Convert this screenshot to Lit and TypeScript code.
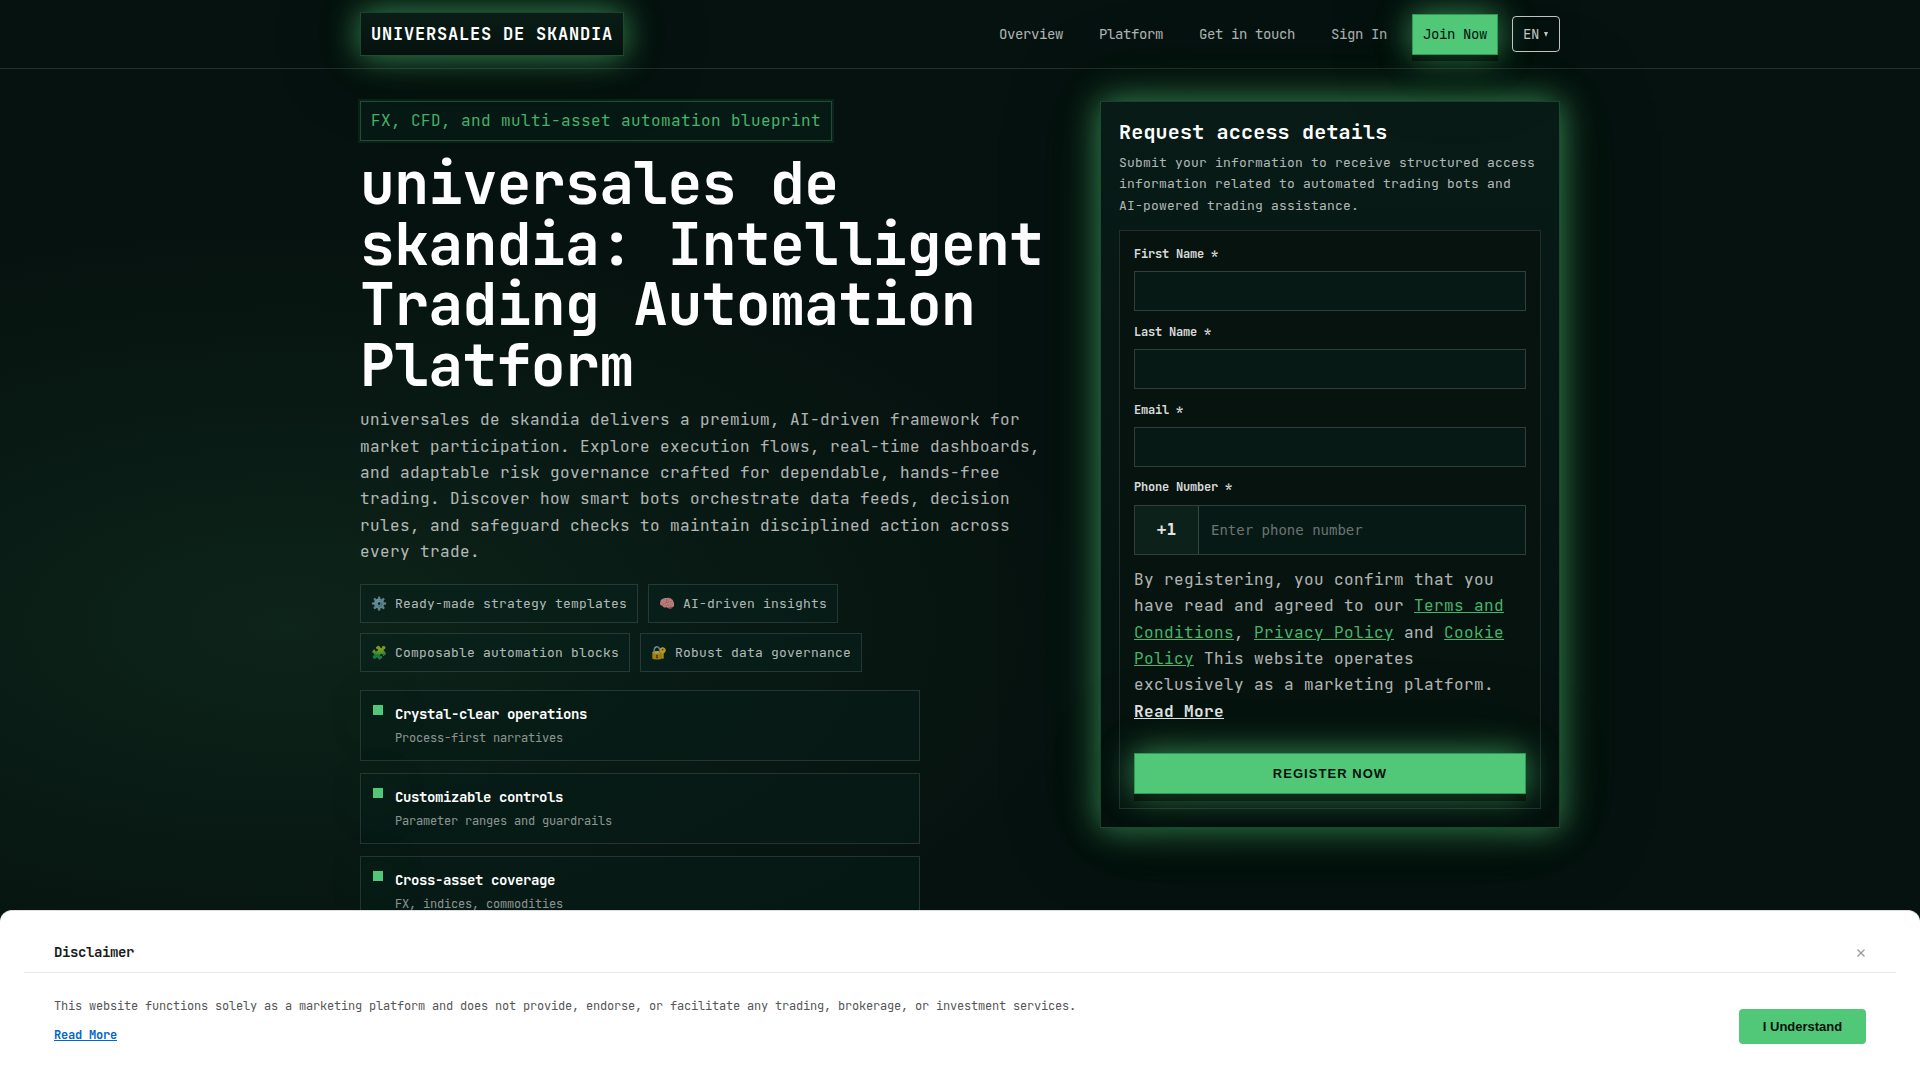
import { LitElement, html, css } from "lit";
import { customElement } from "lit/decorators.js";

@customElement("app-root")
export class AppRoot extends LitElement {
  static styles = css`
    :host {
      --accent: #50c878;
      --line: rgba(255, 255, 255, 0.12);
      --muted: rgba(255, 255, 255, 0.7);
      --glow: 0 0 32px rgba(80, 200, 120, 0.66), 0 0 64px rgba(80, 200, 120, 0.08), 0 0 84px rgba(0, 18, 10, 0.4);
      display: block;
      position: relative;
      width: 100%;
      height: 1080px;
      overflow: hidden;
      color: var(--muted);
      font-family: "JetBrains Mono", "DejaVu Sans Mono", "Liberation Mono", monospace;
      font-size: 16px;
      letter-spacing: 0.4px;
      line-height: 1.65;
      background:
        radial-gradient(820px 400px at 285px 625px, rgba(80, 200, 120, 0.1), rgba(60, 180, 120, 0.05) 50%, transparent 100%),
        #06120f;
    }
    * {
      box-sizing: border-box;
    }
    h1, h2, p, ul {
      margin: 0;
      padding: 0;
    }
    .header {
      border-bottom: 1px solid var(--line);
      padding: 12px 0 12.4px;
    }
    .wrap {
      width: 1200px;
      margin: 0 auto;
    }
    .bar {
      display: flex;
      align-items: center;
      justify-content: space-between;
    }
    .brand {
      position: relative;
      padding: 7px 10px;
      border: 1px solid rgba(80, 200, 120, 0.28);
      background: linear-gradient(#0a1d16, #05110e);
      box-shadow: var(--glow);
      color: #fff;
      font-size: 17px;
      font-weight: 700;
      letter-spacing: 0.8px;
      line-height: 28px;
    }
    .nav {
      display: flex;
      align-items: center;
      font-size: 14px;
      letter-spacing: -0.4px;
      line-height: 23px;
    }
    .link {
      margin-right: 36px;
    }
    .link.last {
      margin-right: 25px;
    }
    .join {
      position: relative;
      padding: 8px 10px;
      border: 1px solid rgba(10, 90, 50, 0.45);
      background: var(--accent);
      color: #05110f;
      box-shadow: 0 6px 0 rgba(0, 0, 0, 0.45), var(--glow);
    }
    .lang {
      display: flex;
      align-items: center;
      gap: 4px;
      position: relative;
      width: 48px;
      height: 36px;
      margin-left: 14px;
      padding-left: 10px;
      border: 1px solid rgba(255, 255, 255, 0.75);
      border-radius: 4px;
      color: rgba(255, 255, 255, 0.75);
    }
    .caret {
      width: 0;
      height: 0;
      margin-left: 1px;
      border: 2.5px solid transparent;
      border-top: 5px solid rgba(255, 255, 255, 0.75);
      border-bottom: 0;
    }
    .hero {
      display: grid;
      grid-template-columns: 1fr 460px;
      gap: 40px;
      align-items: start;
      padding-top: 32px;
    }
    .intro {
      display: flex;
      flex-direction: column;
      align-items: flex-start;
    }
    .eyebrow {
      padding: 6px 10px;
      border: 1px solid rgba(80, 200, 120, 0.32);
      box-shadow: 0 0 0 2px rgba(80, 200, 120, 0.09);
      background: #071914;
      color: #46b56c;
      line-height: 26px;
    }
    h1 {
      margin-top: 11.6px;
      color: #fff;
      font-size: 58px;
      font-weight: 700;
      letter-spacing: -0.63px;
      line-height: 60.6px;
    }
    .about {
      margin-top: 11.8px;
    }
    .chips {
      display: flex;
      flex-wrap: wrap;
      gap: 10px;
      width: 560px;
      margin-top: 18.6px;
      font-size: 13px;
      letter-spacing: 0.2px;
      line-height: 21px;
    }
    .chip {
      display: flex;
      padding: 8px 10px;
      border: 1px solid var(--line);
      background: rgba(8, 32, 27, 0.55);
    }
    .emoji {
      width: 24px;
      letter-spacing: 0;
    }
    .points {
      display: flex;
      flex-direction: column;
      gap: 12px;
      width: 560px;
      margin-top: 18px;
      list-style: none;
    }
    .point {
      display: flex;
      gap: 12px;
      height: 71px;
      padding: 12px;
      border: 1px solid var(--line);
      background: rgba(6, 28, 24, 0.6);
    }
    .mark {
      width: 10px;
      height: 10px;
      margin-top: 2px;
      background: var(--accent);
      box-shadow: 0 4px 40px rgba(30, 130, 60, 0.5);
    }
    .name {
      color: #fff;
      font-size: 14px;
      font-weight: 700;
      letter-spacing: -0.4px;
      line-height: 23.1px;
    }
    .note {
      margin-top: 2.4px;
      color: rgba(255, 255, 255, 0.55);
      font-size: 12px;
      letter-spacing: -0.2px;
      line-height: 19.8px;
    }
    .card {
      padding: 18px;
      border: 1px solid rgba(80, 200, 120, 0.28);
      background: linear-gradient(#081b17, #05110e);
      box-shadow: var(--glow);
    }
    h2 {
      color: #fff;
      font-size: 20px;
      font-weight: 700;
      letter-spacing: 0.2px;
      line-height: 24px;
    }
    .lead {
      margin-top: 7.6px;
      font-size: 13px;
      letter-spacing: 0.2px;
      line-height: 21.45px;
    }
    .form {
      display: flex;
      flex-direction: column;
      height: 578.6px;
      margin-top: 13.8px;
      padding: 12.4px 14px 14px;
      border: 1px solid var(--line);
      background: #06130f;
    }
    .label {
      color: rgba(255, 255, 255, 0.86);
      font-size: 12px;
      font-weight: 700;
      letter-spacing: -0.2px;
      line-height: 20px;
      margin-bottom: 7.7px;
    }
    .input {
      height: 40px;
      margin-bottom: 10.3px;
      border: 1px solid rgba(255, 255, 255, 0.17);
      background: #071915;
    }
    .phone {
      display: flex;
      height: 50px;
      border: 1px solid rgba(255, 255, 255, 0.17);
      background: #071915;
      font-family: "DejaVu Sans Mono", monospace;
      letter-spacing: 0;
      line-height: 48px;
    }
    .code {
      width: 64px;
      border-right: 1px solid rgba(255, 255, 255, 0.17);
      background: #0b211a;
      color: rgba(255, 255, 255, 0.88);
      font-weight: 700;
      text-align: center;
    }
    .hint {
      padding-left: 12px;
      color: #6b7472;
      font-size: 14px;
    }
    .consent {
      position: relative;
      z-index: 1;
      margin-top: 11.7px;
    }
    .consent a {
      color: #46b56c;
      text-decoration: underline;
    }
    .consent .more {
      color: rgba(255, 255, 255, 0.88);
      font-weight: 700;
    }
    .submit {
      display: flex;
      align-items: center;
      justify-content: center;
      height: 41px;
      margin-top: 27.3px;
      border: 1px solid rgba(10, 90, 50, 0.45);
      background: var(--accent);
      box-shadow: 0 7px 0 rgba(0, 0, 0, 0.45), var(--glow);
      color: #05110f;
      font: 700 13px "Liberation Sans", sans-serif;
      letter-spacing: 1.04px;
    }
    .disclaimer {
      position: absolute;
      left: 0;
      right: 0;
      bottom: 0;
      height: 170px;
      padding: 24px 24px 0;
      border-top: 1px solid #ddd;
      border-radius: 12px 12px 0 0;
      background: #fff;
      color: #555;
      font-size: 12px;
      letter-spacing: -0.2px;
    }
    .dhead {
      display: flex;
      align-items: center;
      justify-content: space-between;
      height: 38px;
      padding: 0 30px 2px;
      border-bottom: 1px solid #eaeaea;
      color: #1a1a1a;
      font-size: 14px;
      font-weight: 700;
      letter-spacing: -0.4px;
    }
    .close {
      width: 8px;
      height: 8px;
      margin-right: 1px;
    }
    .dbody {
      display: flex;
      justify-content: space-between;
      padding: 23px 30px 0;
      line-height: 20px;
    }
    .dmore {
      display: inline-block;
      margin-top: 9px;
      color: #0066cc;
      font-weight: 700;
      text-decoration: underline;
    }
    .ok {
      width: 127px;
      height: 35px;
      margin-top: 13px;
      border-radius: 4px;
      background: var(--accent);
      color: #05110f;
      font: 700 13px/35px "Liberation Sans", sans-serif;
      letter-spacing: 0;
      text-align: center;
    }
  `;

  private chips = [
    ["⚙️", "Ready-made strategy templates"],
    ["🧠", "AI-driven insights"],
    ["🧩", "Composable automation blocks"],
    ["🔐", "Robust data governance"],
  ];

  private points = [
    ["Crystal-clear operations", "Process-first narratives"],
    ["Customizable controls", "Parameter ranges and guardrails"],
    ["Cross-asset coverage", "FX, indices, commodities"],
  ];

  render() {
    return html`
      <header class="header">
        <div class="wrap bar">
          <div class="brand">UNIVERSALES DE SKANDIA</div>
          <nav class="nav">
            <span class="link">Overview</span>
            <span class="link">Platform</span>
            <span class="link">Get in touch</span>
            <span class="link last">Sign In</span>
            <span class="join">Join Now</span>
            <span class="lang">EN<i class="caret"></i></span>
          </nav>
        </div>
      </header>
      <main class="wrap hero">
        <section class="intro">
          <div class="eyebrow">FX, CFD, and multi-asset automation blueprint</div>
          <h1>universales de skandia: Intelligent Trading Automation Platform</h1>
          <p class="about">
            universales de skandia delivers a premium, AI-driven framework for market participation. Explore
            execution flows, real-time dashboards, and adaptable risk governance crafted for dependable,
            hands-free trading. Discover how smart bots orchestrate data feeds, decision rules, and safeguard
            checks to maintain disciplined action across every trade.
          </p>
          <div class="chips">
            ${this.chips.map(([icon, text]) => html`<div class="chip"><span class="emoji">${icon}</span>${text}</div>`)}
          </div>
          <ul class="points">
            ${this.points.map(
              ([name, note]) => html`<li class="point">
                <i class="mark"></i>
                <div>
                  <div class="name">${name}</div>
                  <div class="note">${note}</div>
                </div>
              </li>`
            )}
          </ul>
        </section>
        <aside class="card">
          <h2>Request access details</h2>
          <p class="lead">
            Submit your information to receive structured access information related to automated trading bots
            and AI-powered trading assistance.
          </p>
          <div class="form">
            ${["First Name *", "Last Name *", "Email *"].map(
              (label) => html`<div class="label">${label}</div><div class="input"></div>`
            )}
            <div class="label">Phone Number *</div>
            <div class="phone"><span class="code">+1</span><span class="hint">Enter phone number</span></div>
            <p class="consent">
              By registering, you confirm that you have read and agreed to our <a>Terms and Conditions</a>,
              <a>Privacy Policy</a> and <a>Cookie Policy</a> This website operates exclusively as a marketing
              platform. <a class="more">Read More</a>
            </p>
            <div class="submit">REGISTER NOW</div>
          </div>
        </aside>
      </main>
      <div class="disclaimer">
        <div class="dhead">
          <span>Disclaimer</span>
          <svg class="close" viewBox="0 0 8 8">
            <path d="M0.5 0.5 7.5 7.5M7.5 0.5 0.5 7.5" stroke="#999" stroke-width="1.3" fill="none" />
          </svg>
        </div>
        <div class="dbody">
          <div>
            <div>
              This website functions solely as a marketing platform and does not provide, endorse, or facilitate
              any trading, brokerage, or investment services.
            </div>
            <a class="dmore">Read More</a>
          </div>
          <div class="ok">I Understand</div>
        </div>
      </div>
    `;
  }
}
